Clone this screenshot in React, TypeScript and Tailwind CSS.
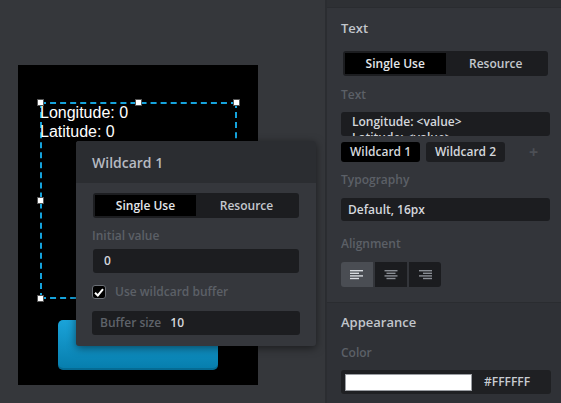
const ui = { fontFamily: '"Open Sans", "Noto Sans", sans-serif' }

function Segmented({ className = "" }: { className?: string }) {
  return (
    <div className={`flex h-[25px] rounded-[3px] bg-[#1c1d20] p-[2px] text-[12px] font-semibold ${className}`}>
      <div className="flex flex-1 items-center justify-center bg-black text-[#e4e6ea]">Single Use</div>
      <div className="flex flex-1 items-center justify-center text-[#c4c8ce]">Resource</div>
    </div>
  )
}

function Label({ children, className = "" }: { children: React.ReactNode; className?: string }) {
  return <div className={`h-[16px] text-[12px] leading-[16px] font-semibold text-[#5c6067] ${className}`}>{children}</div>
}

function AlignIcon({ kind }: { kind: "left" | "center" | "right" }) {
  const rows = [13, 9, 13, 9]
  return (
    <svg width="14" height="10" viewBox="0 0 14 10">
      {rows.map((w, i) => {
        const x = kind === "left" ? 0 : kind === "right" ? 14 - w : (14 - w) / 2
        return <rect key={i} x={x} y={i * 2.6} width={w} height="1.4" fill="currentColor" />
      })}
    </svg>
  )
}

function Handle({ className }: { className: string }) {
  return <div className={`absolute h-[7px] w-[7px] border border-[#555] bg-white ${className}`} />
}

function WildcardPopover() {
  return (
    <div className="absolute left-[76px] top-[141px] w-[240px] overflow-hidden rounded-[3px] bg-[#35373c] shadow-[0_2px_8px_rgba(0,0,0,0.5)]" style={ui}>
      <div className="flex h-[42px] items-center bg-[#2b2d31] pl-[16px] text-[14px] font-semibold text-[#b6bac1]">Wildcard 1</div>
      <div className="px-[16px] pb-[11px] pt-[10px]">
        <Segmented className="mx-[1px]" />
        <Label className="mt-[10px]">Initial value</Label>
        <div className="mx-[1px] mt-[5px] flex h-[24px] items-center rounded-[3px] bg-[#1c1d20] pl-[11px] text-[12px] font-semibold text-[#d4d7dc]">0</div>
        <div className="mt-[11px] flex h-[16px] items-center gap-[9px]">
          <div className="flex h-[14px] w-[14px] items-center justify-center rounded-[3px] border border-[#6a6e75] bg-black">
            <svg width="10" height="9" viewBox="0 0 10 9">
              <path d="M1 4.8 L3.8 7.5 L9 1.2" fill="none" stroke="white" strokeWidth="2" />
            </svg>
          </div>
          <span className="text-[12px] font-semibold text-[#5c6067]">Use wildcard buffer</span>
        </div>
        <div className="mt-[11px] flex h-[24px] items-center gap-[9px] rounded-[3px] bg-[#1c1d20] pl-[8px] text-[12px] font-semibold">
          <span className="text-[#5f636a]">Buffer size</span>
          <span className="text-[#d4d7dc]">10</span>
        </div>
      </div>
    </div>
  )
}

function Canvas() {
  return (
    <div className="relative flex-1 bg-[#35373b] pl-[18px] pt-[65px]">
      <div className="relative h-[320px] w-[240px] bg-black">
        <div className="absolute left-[22px] top-[37px] h-[197px] w-[197px] border-2 border-dashed border-[#15a3dc]">
          <div className="-ml-[2px] -mt-[1px] text-[16px] leading-[19px] text-white" style={{ fontFamily: '"Liberation Sans", Arial, sans-serif' }}>
            <div>Longitude: 0</div>
            <div>Latitude: 0</div>
          </div>
          <Handle className="-left-[5px] -top-[5px]" />
          <Handle className="left-[93px] -top-[5px]" />
          <Handle className="-right-[5px] -top-[5px]" />
          <Handle className="-left-[5px] top-[93px]" />
          <Handle className="-left-[5px] -bottom-[5px]" />
        </div>
        <div className="absolute left-[40px] top-[255px] h-[50px] w-[160px] rounded-[5px] bg-gradient-to-b from-[#1aa3d9] to-[#067dac] shadow-[inset_0_-2px_0_rgba(0,0,0,0.15)]" />
      </div>
      <WildcardPopover />
    </div>
  )
}

function Panel() {
  return (
    <div className="flex w-[236px] flex-col border-l-2 border-[#2b2d31] bg-[#33353a]" style={ui}>
      <div className="h-[8px] border-b border-[#2a2c30] bg-[#2e3034]" />
      <div className="pb-[15px] pl-[14px] pr-[11px]">
        <div className="mt-[11px] h-[18px] text-[13px] leading-[18px] font-semibold text-[#c2c6cc]">Text</div>
        <Segmented className="mx-[2px] mt-[14px]" />
        <Label className="mt-[11px]">Text</Label>
        <div className="mt-[9px] h-[24px] overflow-hidden rounded-[3px] bg-[#1c1d20] pl-[11px] text-[12px] leading-[16px] font-semibold text-[#d4d7dc]">
          <div className="pt-[2px]">Longitude: &lt;value&gt;</div>
          <div>Latitude: &lt;value&gt;</div>
        </div>
        <div className="mt-[6px] flex h-[20px] items-center gap-[6px] text-[12px] font-semibold text-[#d4d7dc]">
          <div className="flex h-full w-[79px] items-center justify-center rounded-[3px] bg-black">Wildcard 1</div>
          <div className="flex h-full w-[79px] items-center justify-center rounded-[3px] bg-[#1d1e21]">Wildcard 2</div>
          <div className="ml-[18px] text-[16px] font-bold text-[#4c4f55]">+</div>
        </div>
        <Label className="mt-[10px]">Typography</Label>
        <div className="mt-[10px] flex h-[23px] items-center rounded-[3px] bg-[#1c1d20] pl-[7px] text-[12px] font-semibold text-[#d4d7dc]">Default, 16px</div>
        <Label className="mt-[15px]">Alignment</Label>
        <div className="mt-[10px] flex h-[25px] w-fit gap-[2px] overflow-hidden rounded-[3px]">
          <div className="flex w-[32px] items-center justify-center bg-[#4a4d53] text-[#d8dbe0]"><AlignIcon kind="left" /></div>
          <div className="flex w-[32px] items-center justify-center bg-[#1b1c1f] text-[#8a8e95]"><AlignIcon kind="center" /></div>
          <div className="flex w-[32px] items-center justify-center bg-[#1b1c1f] text-[#8a8e95]"><AlignIcon kind="right" /></div>
        </div>
      </div>
      <div className="flex-1 border-t border-[#2a2c30] bg-[#2f3136] pl-[14px] pr-[10px]">
        <div className="mt-[10px] h-[18px] text-[13px] leading-[18px] font-semibold text-[#c2c6cc]">Appearance</div>
        <Label className="mt-[14px]">Color</Label>
        <div className="mt-[9px] flex h-[24px] items-center gap-[12px] rounded-[3px] bg-[#1f2023] px-[4px]">
          <div className="h-[17px] w-[127px] border border-[#9a9da2] bg-white" />
          <span className="text-[12px] font-semibold text-[#c8ccd2]">#FFFFFF</span>
        </div>
      </div>
    </div>
  )
}

export default function App() {
  return (
    <div className="flex h-[403px] w-[561px] overflow-hidden">
      <Canvas />
      <Panel />
    </div>
  )
}
